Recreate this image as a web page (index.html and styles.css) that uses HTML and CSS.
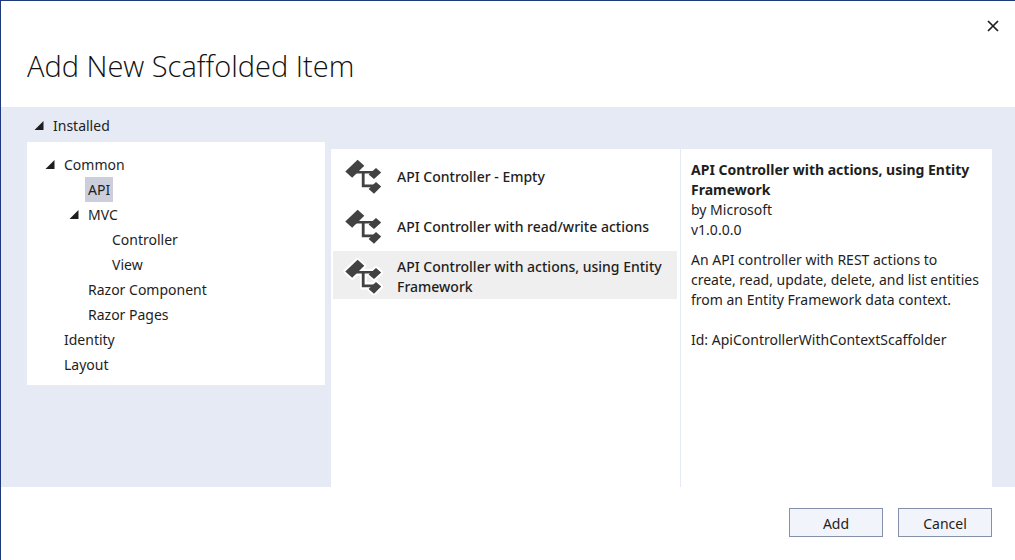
FILE: index.html
```html
<!DOCTYPE html>
<html lang="en">
<head>
<meta charset="utf-8">
<meta name="viewport" content="width=device-width, initial-scale=1">
<title>Add New Scaffolded Item</title>
<link rel="stylesheet" href="styles.css">
</head>
<body>
<svg class="defs" aria-hidden="true">
  <symbol id="controller" viewBox="3 5 40 40">
    <g id="controller-shape">
      <path class="halo" d="M5.3 21.5 17.6 9.8 24.3 15.8 12.2 27.8ZM29 24.5 36 18 41.2 22.5 34 29ZM29 39 36 32 41.2 36.6 34 43.8ZM15 21H32V24H25V34H32V37.4H22V24H15Z"/>
      <path d="M5.3 21.5 17.6 9.8 24.3 15.8 12.2 27.8Z"/>
      <path d="M28.6 24.5 36 18 41.2 22.5 34 29ZM28.6 39 36 32 41.2 36.6 34 43.8Z"/>
      <path d="M15 21H34V23.6H24.6V34.6H34V37.2H21.8V23.6H15Z"/>
    </g>
  </symbol>
  <symbol id="arrow" viewBox="0 0 10 10">
    <path d="M9.5 0V9H0.5Z"/>
  </symbol>
</svg>
<main class="dialog">
  <header class="header">
    <button class="close" type="button" aria-label="Close">
      <svg class="close-icon" viewBox="0 0 12 12" aria-hidden="true"><path d="M1 1 11 11M11 1 1 11"/></svg>
    </button>
    <h1 class="title">Add New Scaffolded Item</h1>
  </header>
  <div class="content">
    <nav class="sidebar" aria-label="Categories">
      <button class="node installed" type="button" aria-expanded="true"><svg class="arrow"><use href="#arrow"/></svg><span class="label">Installed</span></button>
      <ul class="tree">
        <li>
          <button class="node" type="button" aria-expanded="true"><svg class="arrow"><use href="#arrow"/></svg><span class="label">Common</span></button>
          <ul class="branch">
            <li><button class="node leaf selected" type="button"><span class="label">API</span></button></li>
            <li>
              <button class="node" type="button" aria-expanded="true"><svg class="arrow"><use href="#arrow"/></svg><span class="label">MVC</span></button>
              <ul class="branch">
                <li><button class="node leaf" type="button"><span class="label">Controller</span></button></li>
                <li><button class="node leaf" type="button"><span class="label">View</span></button></li>
              </ul>
            </li>
            <li><button class="node leaf" type="button"><span class="label">Razor Component</span></button></li>
            <li><button class="node leaf" type="button"><span class="label">Razor Pages</span></button></li>
          </ul>
        </li>
        <li><button class="node leaf" type="button"><span class="label">Identity</span></button></li>
        <li><button class="node leaf" type="button"><span class="label">Layout</span></button></li>
      </ul>
    </nav>
    <section class="templates" aria-label="Templates">
      <button class="template" type="button"><svg class="template-icon"><use href="#controller"/></svg><span class="template-name">API Controller - Empty</span></button>
      <button class="template" type="button"><svg class="template-icon"><use href="#controller"/></svg><span class="template-name">API Controller with read/write actions</span></button>
      <button class="template current" type="button"><svg class="template-icon"><use href="#controller"/></svg><span class="template-name">API Controller with actions, using Entity Framework</span></button>
    </section>
    <section class="details" aria-label="Details">
      <h2 class="name">API Controller with actions, using Entity Framework</h2>
      <p>by Microsoft</p>
      <p>v1.0.0.0</p>
      <p class="description">An API controller with REST actions to create, read, update, delete, and list entities from an Entity Framework data context.</p>
      <p>Id: ApiControllerWithContextScaffolder</p>
    </section>
  </div>
  <footer class="footer">
    <button class="action" type="button">Add</button>
    <button class="action" type="button">Cancel</button>
  </footer>
</main>
</body>
</html>
```
FILE: styles.css
```css
* {
  box-sizing: border-box;
}

body {
  margin: 0;
  color: #1e1e1e;
  background: #fff;
  font: 14px/20px "Noto Sans", "Open Sans", sans-serif;
}

h1, h2, p, ul {
  margin: 0;
  padding: 0;
}

ul {
  list-style: none;
}

button {
  border: 0;
  padding: 0;
  background: none;
  color: inherit;
  font: inherit;
}

.defs {
  position: absolute;
  width: 0;
  height: 0;
}

.dialog {
  display: flex;
  flex-direction: column;
  min-height: 100vh;
  border-top: 1px solid #1f3a7a;
  border-left: 1px solid #1f3a7a;
}

.header {
  display: flex;
  flex-direction: column;
  padding: 13px 10px 21px 26px;
}

.close {
  align-self: flex-end;
  display: grid;
  place-items: center;
  width: 24px;
  height: 24px;
}

.close-icon {
  width: 12px;
  height: 12px;
  fill: none;
  stroke: #1e1e1e;
  stroke-width: 1.7;
}

.title {
  margin-top: 8px;
  color: #111;
  font: 300 29px/40px "Open Sans", "Noto Sans", sans-serif;
}

.content {
  flex: 1;
  display: grid;
  grid-template-columns: 304fr 350fr 311fr;
  padding: 0 23px 0 26px;
  background: #e6eaf5;
}

.sidebar {
  padding-right: 6px;
}

.node {
  display: flex;
  align-items: center;
  height: 25px;
}

.installed {
  height: 35px;
  padding: 2px 0 0 7px;
}

.arrow {
  width: 10px;
  height: 10px;
  margin-right: 6px;
  fill: #1e1e1e;
}

.label {
  padding: 0 3px;
  line-height: 25px;
}

.tree {
  padding: 10px 18px 8px;
  background: #fff;
}

.branch {
  padding-left: 24px;
}

.leaf {
  padding-left: 16px;
}

.selected .label {
  background: #cccedb;
}

.templates {
  display: flex;
  flex-direction: column;
  gap: 2px;
  margin-top: 42px;
  padding: 2px 3px 2px 2px;
  border-right: 1px solid #e6eaf5;
  background: #fff;
}

.template {
  display: flex;
  align-items: center;
  gap: 14px;
  min-height: 48px;
  padding: 2px 0 2px 10px;
  font-weight: 500;
  text-align: left;
}

.template-name {
  padding-top: 4px;
}

.current {
  background: #efefef;
}

.template-icon {
  flex: none;
  width: 40px;
  height: 40px;
  fill: #424242;
}

.halo {
  fill: #fff;
  stroke: #fff;
  stroke-width: 4;
  stroke-linejoin: round;
}

.details {
  margin-top: 42px;
  padding: 11px 8px 11px 10px;
  background: #fff;
}

.name {
  font-size: 14px;
  font-weight: 700;
  line-height: 20px;
}

.description {
  margin: 10px 0 20px;
}

.footer {
  display: flex;
  justify-content: flex-end;
  gap: 15px;
  padding: 21px 23px 23px;
}

.action {
  width: 94px;
  height: 29px;
  padding-top: 2px;
  border: 1px solid #8591a8;
  background: #f2f4fc;
}
```
